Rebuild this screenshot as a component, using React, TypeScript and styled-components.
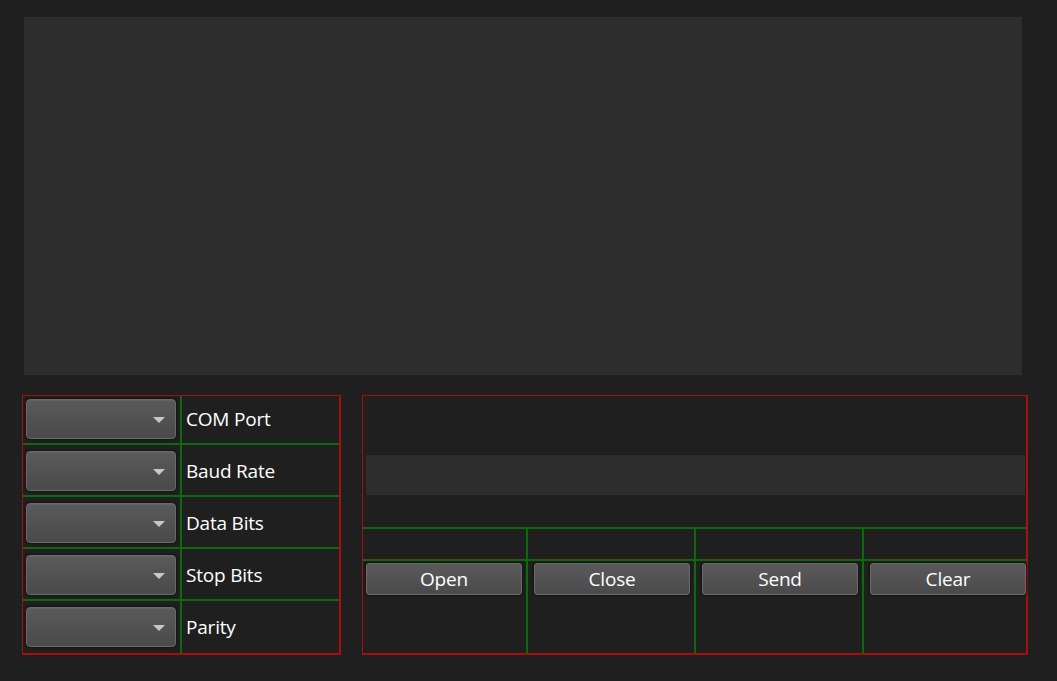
import React from 'react';
import styled, { createGlobalStyle } from 'styled-components';

const GlobalStyle = createGlobalStyle`
  html, body {
    margin: 0;
    padding: 0;
    background: #1f1f1f;
    width: 1057px;
    height: 681px;
    overflow: hidden;
  }
  body {
    font-family: "Open Sans", "Noto Sans", sans-serif;
    color: #ffffff;
  }
`;

const GREEN = '#0b6a0b';
const RED = '#a80e0e';

const Window = styled.div`
  display: flex;
  flex-direction: column;
  padding: 17px 29px 0 22px;
  box-sizing: border-box;
  width: 1057px;
  height: 681px;
`;

const Display = styled.div`
  margin-left: 2px;
  width: 998px;
  height: 358px;
  background: #2d2d2d;
`;

const BottomRow = styled.div`
  display: flex;
  gap: 21px;
  margin-top: 20px;
`;

const SettingsGrid = styled.div`
  display: grid;
  grid-template-columns: 159px 1fr;
  grid-template-rows: 49px 52px 52px 52px 1fr;
  width: 320px;
  height: 260px;
  border: 1px solid ${RED};
  border-bottom-width: 2px;
  border-right-width: 2px;
  box-sizing: border-box;
`;

const Cell = styled.div<{ $row: number; $last?: boolean; $left?: boolean }>`
  display: flex;
  align-items: flex-start;
  box-sizing: border-box;
  border-bottom: ${p => (p.$last ? 'none' : `2px solid ${GREEN}`)};
  border-right: ${p => (p.$left ? `2px solid ${GREEN}` : 'none')};
  padding-left: ${p => (p.$left ? '3px' : '4px')};
  padding-top: ${p => (p.$row === 0 ? '3px' : '6px')};
`;

const Combo = styled.div`
  position: relative;
  width: 150px;
  height: 40px;
  box-sizing: border-box;
  border: 1px solid #6a6a6a;
  border-radius: 4px;
  background: linear-gradient(#5a5a5a, #4a4a4a);
  box-shadow: 0 0 2px 1px #141414, inset 0 1px 0 #626262;
`;

const Arrow = styled.span`
  position: absolute;
  right: 10px;
  top: 17px;
  width: 0;
  height: 0;
  border-left: 6px solid transparent;
  border-right: 6px solid transparent;
  border-top: 6px solid #c8c8c8;
`;

const Label = styled.span`
  font-size: 19px;
  letter-spacing: -0.2px;
  line-height: 40px;
  color: #ffffff;
`;

const IOPanel = styled.div`
  display: flex;
  flex-direction: column;
  width: 667px;
  height: 260px;
  border: 1px solid ${RED};
  border-bottom-width: 2px;
  border-right-width: 2px;
  box-sizing: border-box;
`;

const InputArea = styled.div`
  height: 133px;
  display: flex;
  align-items: flex-start;
  padding: 59px 1px 0 3px;
  border-bottom: 2px solid ${GREEN};
  box-sizing: border-box;
`;

const InputBox = styled.div`
  flex: 1;
  height: 40px;
  background: #2d2d2d;
`;

const ButtonGrid = styled.div`
  flex: 1;
  display: grid;
  grid-template-columns: 165px 168px 168px 1fr;
  grid-template-rows: 32px 1fr;
`;

const GridCell = styled.div<{ $col: number; $top?: boolean }>`
  box-sizing: border-box;
  border-right: ${p => (p.$col < 3 ? `2px solid ${GREEN}` : 'none')};
  border-bottom: ${p => (p.$top ? `2px solid ${GREEN}` : 'none')};
  padding: 2px 0 0 ${p => (p.$col === 0 ? '3px' : '6px')};
`;

const Button = styled.button`
  position: relative;
  display: block;
  width: 156px;
  height: 32px;
  padding: 0;
  box-sizing: border-box;
  border: 1px solid #6a6a6a;
  border-radius: 3px;
  background: linear-gradient(#5a5a5a, #4a4a4a);
  box-shadow: 0 0 2px 1px #141414;
  color: #ffffff;
  font-family: "Open Sans", "Noto Sans", sans-serif;
  font-size: 19px;
  letter-spacing: -0.2px;
  line-height: 28px;

  &::before {
    content: '';
    position: absolute;
    left: 1px;
    right: 1px;
    top: -7px;
    height: 2px;
    background: #3a1414;
  }
`;

const settings = ['COM Port', 'Baud Rate', 'Data Bits', 'Stop Bits', 'Parity'];
const actions = ['Open', 'Close', 'Send', 'Clear'];

export default function App() {
  return (
    <>
      <GlobalStyle />
      <Window>
        <Display />
        <BottomRow>
          <SettingsGrid>
            {settings.map((name, i) => (
              <React.Fragment key={name}>
                <Cell $left $row={i} $last={i === settings.length - 1}>
                  <Combo>
                    <Arrow />
                  </Combo>
                </Cell>
                <Cell $row={i} $last={i === settings.length - 1}>
                  <Label>{name}</Label>
                </Cell>
              </React.Fragment>
            ))}
          </SettingsGrid>
          <IOPanel>
            <InputArea>
              <InputBox />
            </InputArea>
            <ButtonGrid>
              {actions.map((a, i) => (
                <GridCell key={a + '-top'} $top $col={i} />
              ))}
              {actions.map((a, i) => (
                <GridCell key={a} $col={i}>
                  <Button>{a}</Button>
                </GridCell>
              ))}
            </ButtonGrid>
          </IOPanel>
        </BottomRow>
      </Window>
    </>
  );
}
